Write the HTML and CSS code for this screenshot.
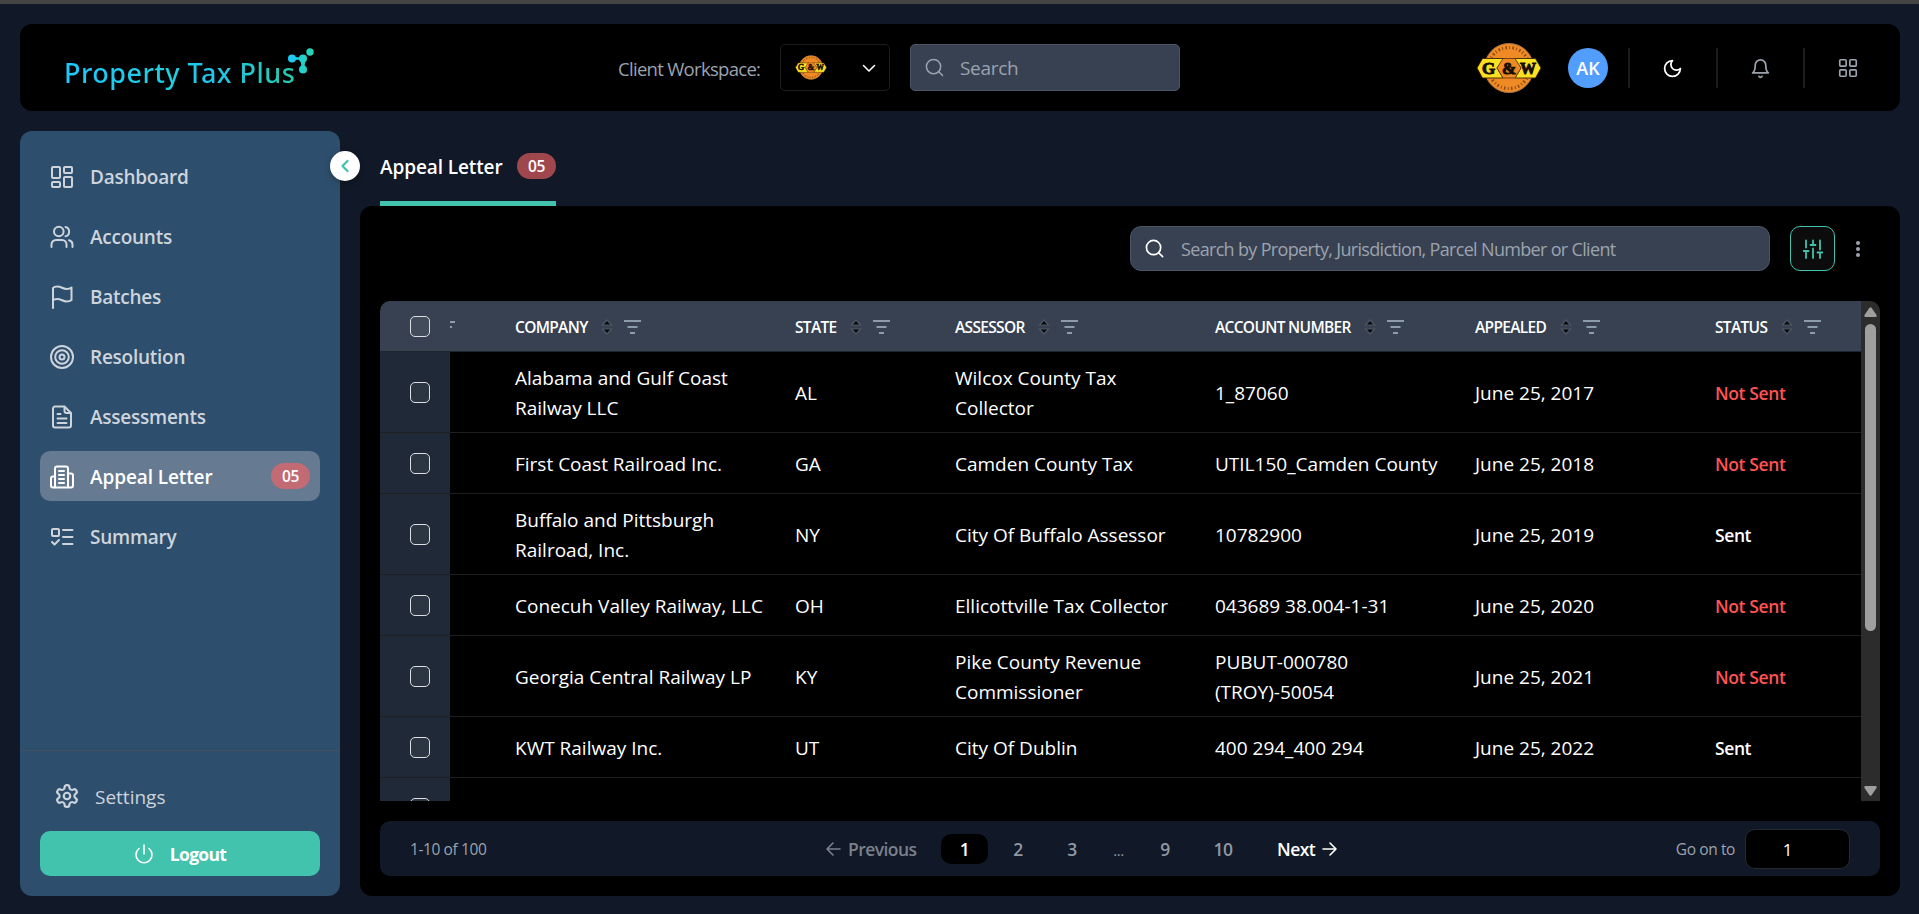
FILE: index.html
```html
<!DOCTYPE html>
<html lang="en">
<head>
<meta charset="utf-8">
<title>Property Tax Plus</title>
<link rel="stylesheet" href="styles.css">
</head>
<body>
<svg class="defs" width="0" height="0" aria-hidden="true">
  <defs>
    <symbol id="gw" viewBox="0 0 66 50">
      <circle cx="33" cy="25" r="24.5" fill="#f08a24" stroke="#a8764a" stroke-width="1"/>
      <circle cx="33" cy="25" r="20.5" fill="none" stroke="#8f4c18" stroke-width="3.2" stroke-dasharray="1.6 2.2 .9 2.4"/>
      <path d="M1 25 6.500 15.500H28L21 25l6 10H6.500z" fill="#fbe122" stroke="#3a2208" stroke-width=".9"/>
      <path d="M65 25 59.500 15.500H38L45 25l-6 10h20.500z" fill="#fbe122" stroke="#3a2208" stroke-width=".9"/>
      <path d="m21 25 6-9.500h12l6 9.500-6 10H27z" fill="#f08a24" stroke="#5a2d0c" stroke-width=".8"/>
      <text x="12.500" y="30.500" class="gw-letter">G</text>
      <text x="33" y="30.500" class="gw-letter">&amp;</text>
      <text x="52" y="30.500" class="gw-letter w">W</text>
    </symbol>
    <symbol id="sort" viewBox="0 0 12 16">
      <path d="M6 0 12 6.500H0zM6 16 0 9.500h12z" fill="#4d5663"/>
      <path d="M6 2 9.200 5.500H2.800zM6 14 2.800 10.500h6.400z" fill="#07090c"/>
    </symbol>
    <symbol id="filter" viewBox="0 0 18 14">
      <path d="M0 1h17M3.500 7h10M6 13h5" stroke="#8e9bab" stroke-width="2" fill="none"/>
    </symbol>
    <linearGradient id="brand" gradientUnits="userSpaceOnUse" x1="0" y1="0" x2="20" y2="0"><stop offset="0" stop-color="#1cc8ff"/><stop offset="1" stop-color="#27d3b8"/></linearGradient>
  </defs>
</svg>

<header class="topbar">
  <div class="brand">
    <span class="brand-name">Property Tax Plus</span>
    <svg class="brand-mark" width="26" height="32" viewBox="0 0 26 32" fill="url(#brand)">
      <circle cx="4" cy="10.500" r="4"/><circle cx="15" cy="10.500" r="4"/><circle cx="22" cy="4" r="3.700"/><circle cx="15" cy="21.500" r="4"/>
      <path d="M4 8q5.500 2.500 11 0v5q-5.500-2.500-11 0zM12 12q2.500 5 0 8h6q-2.500-3 0-8z"/>
    </svg>
  </div>
  <span class="workspace-label">Client Workspace:</span>
  <div class="workspace-select">
    <svg width="32" height="25"><use href="#gw"/></svg>
    <svg width="14" height="14" viewBox="0 0 14 14" class="stroke thin"><path d="m1.500 4.500 5.500 5.500 5.500-5.500"/></svg>
  </div>
  <div class="search">
    <svg width="19" height="19" viewBox="0 0 20 20" class="stroke thin"><circle cx="9" cy="9" r="7.500"/><path d="m14.500 14.500 4 4"/></svg>
    <span>Search</span>
  </div>
  <div class="tools">
    <svg class="client-logo" width="66" height="50"><use href="#gw"/></svg>
    <div class="avatar">AK</div>
    <div class="tool moon"><svg width="21" height="21" viewBox="0 0 24 24" class="stroke"><path d="M12 3a6 6 0 0 0 9 9 9 9 0 1 1-9-9Z"/></svg></div>
    <div class="tool"><svg width="21" height="21" viewBox="0 0 24 24" class="stroke"><path d="M6 8a6 6 0 0 1 12 0c0 7 3 9 3 9H3s3-2 3-9M10.300 21a1.940 1.940 0 0 0 3.400 0"/></svg></div>
    <div class="tool"><svg width="22" height="22" viewBox="0 0 24 24" class="stroke slim"><rect x="3" y="3" width="7" height="7" rx="1"/><rect x="14" y="3" width="7" height="7" rx="1"/><rect x="14" y="14" width="7" height="7" rx="1"/><rect x="3" y="14" width="7" height="7" rx="1"/></svg></div>
  </div>
</header>

<div class="body">
  <aside class="sidebar">
    <button class="collapse"><svg width="16" height="16" viewBox="0 0 16 16" class="stroke bold"><path d="M10.500 3 5.500 8l5 5"/></svg></button>
    <nav class="nav">
      <a class="nav-item"><svg viewBox="0 0 24 24" class="stroke"><rect x="2" y="2" width="8" height="11" rx="1"/><rect x="14" y="2" width="8" height="6" rx="1"/><rect x="14" y="12" width="8" height="10" rx="1"/><rect x="2" y="17" width="8" height="5" rx="1"/></svg><span>Dashboard</span></a>
      <a class="nav-item"><svg viewBox="0 0 24 24" class="stroke"><circle cx="8.800" cy="6.500" r="4.800"/><path d="M1.500 22v-2.500a4.500 4.500 0 0 1 4.500-4.500h6a4.500 4.500 0 0 1 4.500 4.500V22M15.500 2a4.800 4.800 0 0 1 0 9.300M22.500 22v-2.500a4.500 4.500 0 0 0-3.500-4.300"/></svg><span>Accounts</span></a>
      <a class="nav-item"><svg viewBox="0 0 24 24" class="stroke"><path d="M3 23V3s1-1.500 4.500-1.500S13 4 16.500 4 21.500 2.500 21.500 2.500V15s-1.500 1.500-5 1.500S11 14 7.500 14 3 15.500 3 15.500"/></svg><span>Batches</span></a>
      <a class="nav-item"><svg viewBox="0 0 24 24" class="stroke"><circle cx="12" cy="12" r="11"/><circle cx="12" cy="12" r="6.800"/><circle cx="12" cy="12" r="2.500"/></svg><span>Resolution</span></a>
      <a class="nav-item"><svg viewBox="0 0 24 24" class="stroke"><path d="M14.500 1.500H5A2 2 0 0 0 3 3.500v17a2 2 0 0 0 2 2h14a2 2 0 0 0 2-2V8zM14.500 1.500V6a2 2 0 0 0 2 2H21M7.500 9h3M7.500 13.500h9M7.500 18h9"/></svg><span>Assessments</span></a>
      <a class="nav-item active"><svg viewBox="0 0 24 24" class="stroke"><path d="M5 22.500V3.500a2 2 0 0 1 2-2h9a2 2 0 0 1 2 2v19zM5 11.500H3a2 2 0 0 0-2 2v7a2 2 0 0 0 2 2h2M18 8.500h3a2 2 0 0 1 2 2v10a2 2 0 0 1-2 2h-3M9 6h5M9 10h5M9 14h5M9 18h5"/></svg><span>Appeal Letter</span><b class="count">05</b></a>
      <a class="nav-item"><svg viewBox="0 0 24 24" class="stroke"><rect x="2" y="4" width="7" height="7" rx="1"/><path d="m2 17 2.500 2.500L9 15M13 5h9.500M13 12h9.500M13 19h9.500"/></svg><span>Summary</span></a>
    </nav>
    <div class="side-foot">
      <a class="settings"><svg width="26" height="26" viewBox="0 0 24 24" class="stroke"><path d="M12.220 2h-.44a2 2 0 0 0-2 2v.18a2 2 0 0 1-1 1.730l-.43.25a2 2 0 0 1-2 0l-.15-.08a2 2 0 0 0-2.730.73l-.22.38a2 2 0 0 0 .73 2.730l.15.1a2 2 0 0 1 1 1.720v.51a2 2 0 0 1-1 1.740l-.15.09a2 2 0 0 0-.73 2.730l.22.38a2 2 0 0 0 2.730.73l.15-.08a2 2 0 0 1 2 0l.43.25a2 2 0 0 1 1 1.730V20a2 2 0 0 0 2 2h.44a2 2 0 0 0 2-2v-.18a2 2 0 0 1 1-1.730l.43-.25a2 2 0 0 1 2 0l.15.08a2 2 0 0 0 2.730-.73l.22-.39a2 2 0 0 0-.73-2.730l-.15-.08a2 2 0 0 1-1-1.740v-.5a2 2 0 0 1 1-1.740l.15-.09a2 2 0 0 0 .73-2.730l-.22-.38a2 2 0 0 0-2.730-.73l-.15.08a2 2 0 0 1-2 0l-.43-.25a2 2 0 0 1-1-1.730V4a2 2 0 0 0-2-2z"/><circle cx="12" cy="12" r="3"/></svg><span>Settings</span></a>
      <button class="logout"><svg width="20" height="20" viewBox="0 0 20 20" class="stroke thin"><path d="M10 1v9M5 4.500a8 8 0 1 0 10 0"/></svg><span>Logout</span></button>
    </div>
  </aside>

  <main class="main">
    <div class="tabs"><div class="tab"><span>Appeal Letter</span><b class="count">05</b></div></div>
    <section class="panel">
      <div class="toolbar">
        <div class="search wide">
          <svg width="19" height="19" viewBox="0 0 20 20" class="stroke slim"><circle cx="9" cy="9" r="7.500"/><path d="m14.500 14.500 4 4"/></svg>
          <span>Search by Property, Jurisdiction, Parcel Number or Client</span>
        </div>
        <button class="filters"><svg width="20" height="20" viewBox="0 0 20 20" class="stroke slim"><path d="M3 1.500v7M3 12v7M.5 12h5M10 1.500v4M10 9.500V19M7.500 6h5M17 1.500v9M17 14v5M14.500 13.500h5"/></svg></button>
        <svg class="more" width="6" height="18" viewBox="0 0 6 18" fill="#9ca3af"><circle cx="3" cy="3" r="2"/><circle cx="3" cy="9" r="2"/><circle cx="3" cy="15" r="2"/></svg>
      </div>

      <div class="table">
        <div class="grid">
          <div class="row head">
            <div class="check"><i class="box"></i><i class="peek"></i></div>
            <div class="cell"><span>COMPANY</span><svg class="s"><use href="#sort"/></svg><svg class="f"><use href="#filter"/></svg></div>
            <div class="cell"><span>STATE</span><svg class="s"><use href="#sort"/></svg><svg class="f"><use href="#filter"/></svg></div>
            <div class="cell"><span>ASSESSOR</span><svg class="s"><use href="#sort"/></svg><svg class="f"><use href="#filter"/></svg></div>
            <div class="cell"><span>ACCOUNT NUMBER</span><svg class="s"><use href="#sort"/></svg><svg class="f"><use href="#filter"/></svg></div>
            <div class="cell"><span>APPEALED</span><svg class="s"><use href="#sort"/></svg><svg class="f"><use href="#filter"/></svg></div>
            <div class="cell"><span>STATUS</span><svg class="s"><use href="#sort"/></svg><svg class="f"><use href="#filter"/></svg></div>
          </div>
          <div class="row tall"><div class="check"><i class="box"></i></div><div>Alabama and Gulf Coast<br>Railway LLC</div><div>AL</div><div>Wilcox County Tax<br>Collector</div><div>1_87060</div><div>June 25, 2017</div><div class="status unsent">Not Sent</div></div>
          <div class="row"><div class="check"><i class="box"></i></div><div>First Coast Railroad Inc.</div><div>GA</div><div>Camden County Tax</div><div>UTIL150_Camden County</div><div>June 25, 2018</div><div class="status unsent">Not Sent</div></div>
          <div class="row tall"><div class="check"><i class="box"></i></div><div>Buffalo and Pittsburgh<br>Railroad, Inc.</div><div>NY</div><div>City Of Buffalo Assessor</div><div>10782900</div><div>June 25, 2019</div><div class="status">Sent</div></div>
          <div class="row"><div class="check"><i class="box"></i></div><div>Conecuh Valley Railway, LLC</div><div>OH</div><div>Ellicottville Tax Collector</div><div>043689 38.004-1-31</div><div>June 25, 2020</div><div class="status unsent">Not Sent</div></div>
          <div class="row tall"><div class="check"><i class="box"></i></div><div>Georgia Central Railway LP</div><div>KY</div><div>Pike County Revenue<br>Commissioner</div><div>PUBUT-000780<br>(TROY)-50054</div><div>June 25, 2021</div><div class="status unsent">Not Sent</div></div>
          <div class="row"><div class="check"><i class="box"></i></div><div>KWT Railway Inc.</div><div>UT</div><div>City Of Dublin</div><div>400 294_400 294</div><div>June 25, 2022</div><div class="status">Sent</div></div>
          <div class="row"><div class="check"><i class="box"></i></div></div>
        </div>
        <div class="scrollbar">
          <svg width="13" height="10" viewBox="0 0 13 10" fill="#9f9f9f"><path d="M5.500.8q1-1.200 2 0L12.500 8q.6 2-1 2h-10q-1.600 0-1-2z"/></svg>
          <div class="thumb"></div>
          <svg class="down" width="13" height="10" viewBox="0 0 13 10" fill="#9f9f9f"><path d="M5.500 9.200q1 1.200 2 0L12.500 2q.6-2-1-2h-10Q-.1 0 .5 2z"/></svg>
        </div>
      </div>

      <footer class="pager">
        <span class="range">1-10 of 100</span>
        <div class="pages">
          <span class="prev"><svg width="16" height="16" viewBox="0 0 16 16" class="stroke thin"><path d="M15 8H2M8 2 2 8l6 6"/></svg><span>Previous</span></span>
          <b class="page current">1</b><b class="page">2</b><b class="page">3</b><b class="page dots">...</b><b class="page">9</b><b class="page ten">10</b>
          <span class="next"><span>Next</span><svg width="16" height="16" viewBox="0 0 16 16" class="stroke thin"><path d="M1 8h13M8 2l6 6-6 6"/></svg></span>
        </div>
        <div class="goto"><span>Go on to</span><div class="goto-input">1</div></div>
      </footer>
    </section>
  </main>
</div>
</body>
</html>
```
FILE: styles.css
```css
* { box-sizing: border-box; }
body {
  margin: 0;
  height: 914px;
  overflow: hidden;
  display: flex;
  flex-direction: column;
  gap: 20px;
  padding: 20px 19px 18px 20px;
  border-top: 4px solid #444;
  background: #111827;
  color: #fff;
  font-family: "Open Sans", "Noto Sans", sans-serif;
  font-size: 19px;
}
button { font: inherit; border: 0; padding: 0; }
svg { display: block; flex: none; }
.defs { position: absolute; }
.stroke { fill: none; stroke: currentColor; stroke-width: 2; stroke-linecap: round; stroke-linejoin: round; }
.stroke.slim { stroke-width: 1.8; }
.stroke.thin { stroke-width: 1.6; }
.stroke.bold { stroke-width: 2.3; }
.gw-letter { font: 900 17px "Liberation Serif", serif; text-anchor: middle; fill: #141006; stroke: #141006; stroke-width: 1px; }
.gw-letter.w { font-size: 16px; }

.topbar {
  height: 87px;
  flex: none;
  display: flex;
  align-items: center;
  background: #000;
  border-radius: 12px;
  padding: 0 9.5px 0 44px;
}
.brand { width: 554px; display: flex; align-items: flex-start; }
.brand-name {
  width: 232px;
  margin: 10px -8px 0 0;
  font-family: "Noto Sans", "Open Sans", sans-serif;
  font-size: 27px;
  font-weight: 500;
  line-height: 40px;
  letter-spacing: .48px;
  white-space: nowrap;
  background: linear-gradient(90deg, #1cc8ff, #20cfe0 45%, #1cc8f0 62%, #27c9a8);
  -webkit-background-clip: text;
  background-clip: text;
  color: transparent;
}
.brand-mark { margin-top: 5px; }
.workspace-label { width: 162px; padding-top: 1px; color: #9ca3af; font-weight: 500; font-size: 18.5px; letter-spacing: -.7px; white-space: nowrap; }
.workspace-select {
  width: 110px; height: 47px;
  border: 1px solid #1d1d1f; border-radius: 5px;
  display: flex; align-items: center; justify-content: space-between;
  padding: 0 13px 0 14px;
}
.search {
  width: 270px; height: 47px;
  margin-left: 20px;
  display: flex; align-items: center; gap: 16px;
  padding-left: 14px;
  background: #374151;
  border: 1px solid #4b5563;
  border-radius: 5px;
  color: #9ca3af;
}
.search span { padding-top: 1px; letter-spacing: -.3px; }
.tools { margin-left: auto; display: flex; align-items: center; }
.avatar {
  width: 40px; height: 40px; margin: 1px 20px 0 26px;
  border-radius: 50%;
  background: #529eff;
  display: grid; place-items: center;
  font-size: 18px; font-weight: 600;
}
.tool {
  width: 87.5px; height: 40px;
  margin-top: 1px;
  border-left: 2px solid #1c1c1d;
  display: grid; place-items: center;
  color: #9ca3af;
}
.tool.moon { color: #fff; }

.body { flex: 1; display: flex; gap: 20px; min-height: 0; }
.sidebar {
  position: relative;
  width: 320px; height: 765px;
  display: flex; flex-direction: column; justify-content: space-between;
  background: #2d4e6c;
  border-radius: 12px;
  color: #cdd4db;
}
.collapse {
  position: absolute; left: 310px; top: 20px;
  width: 30px; height: 30px;
  border-radius: 50%;
  background: #fff; color: #41c3ad;
  display: grid; place-items: center;
  box-shadow: 0 2px 6px rgba(0, 0, 0, .25);
}
.nav { display: flex; flex-direction: column; gap: 10px; padding: 20px 20px 0; }
.nav-item {
  height: 50px; border-radius: 10px;
  display: flex; align-items: center; gap: 16px;
  padding: 0 10px;
  font-weight: 600;
  letter-spacing: -.25px;
}
.nav-item span { padding-top: 2px; }
.nav-item svg { width: 24px; height: 24px; margin-top: 1px; }
.nav-item.active { background: #667b91; color: #fff; letter-spacing: -.1px; }
.count {
  width: 39px; height: 26px;
  border-radius: 13px;
  display: grid; place-items: center;
  font-size: 15.5px; font-weight: 600;
  letter-spacing: -.3px;
  color: #fff;
}
.nav-item .count { margin-left: auto; background: #c36b75; }
.side-foot { border-top: 1px solid #42505f; padding: 22px 20px 20px; height: 146px; display: flex; flex-direction: column; justify-content: space-between; }
.settings { display: flex; align-items: center; gap: 14px; height: 45px; padding-left: 14px; font-weight: 500; }
.settings span { padding: 2px 0 0 1px; }
.logout {
  height: 45px; border-radius: 10px;
  background: #41c3ad; color: #fff;
  display: flex; align-items: center; justify-content: center; gap: 16px;
  font-size: 17.5px; font-weight: 700; letter-spacing: -.7px;
}
.logout span { padding-top: 1px; }

.main { flex: 1; display: flex; flex-direction: column; }
.tabs { height: 75px; padding: 0 20px; display: flex; }
.tab {
  height: 75px; width: 176px;
  display: flex; align-items: center; justify-content: space-between;
  border-bottom: 5px solid #41c3ad;
  font-weight: 600;
  letter-spacing: -.1px;
  white-space: nowrap;
}
.tab > span { padding-top: 2px; }
.tab .count { background: #a0474e; }
.panel { height: 690px; background: #000; border-radius: 12px; padding: 20px; display: flex; flex-direction: column; }
.toolbar { height: 45px; display: flex; align-items: center; justify-content: flex-end; }
.search.wide { width: 640px; height: 45px; border-radius: 11px; gap: 17px; }
.search.wide svg { color: #fff; }
.search.wide span { font-size: 18px; letter-spacing: -.67px; }
.filters {
  width: 45px; height: 45px; margin-left: 20px;
  border: 1px solid #41c3ad; border-radius: 10px;
  background: #0c0c0d; color: #41c3ad;
  display: grid; place-items: center;
}
.more { margin: 0 19px 0 20px; }

.table { height: 500px; margin-top: 30px; display: flex; overflow: hidden; border-radius: 10px 10px 0 0; }
.grid { flex: 1; height: 500px; overflow: hidden; }
.row {
  display: grid;
  grid-template-columns: 135px 280px 160px 260px 260px 240px 1fr;
  align-items: center;
  height: 61px;
  border-bottom: 1px solid #1e1f20;
  line-height: 30px;
  white-space: nowrap;
}
.row > div:not(.check):not(.cell) { padding-top: 2px; }
.row.tall { height: 81px; }
.check { width: 70px; height: 100%; background: #1f2937; display: flex; align-items: center; padding-left: 30px; }
.box { width: 20px; height: 21px; border: 1.500px solid #dcdfe2; border-radius: 5px; background: rgba(255, 255, 255, .06); }
.row.head { height: 51px; background: #374151; border-bottom-color: #1c2430; font-size: 15.5px; font-weight: 600; letter-spacing: -.68px; }
.head .check { background: none; width: 80px; }
.peek { width: 5px; height: 7px; margin: -4px 0 0 20px; border-top: 2px solid #8e9bab; background: linear-gradient(#8e9bab, #8e9bab) 0 100% / 2px 2px no-repeat; }
.cell { display: flex; align-items: center; padding-top: 2px; }
.s { width: 12px; height: 16px; margin: 0 11px 0 13.5px; }
.f { width: 18px; height: 14px; }
.status { font-size: 17.5px; font-weight: 600; letter-spacing: -.4px; }
.unsent { color: #ff5353; }
.scrollbar { width: 19px; background: #2c2c2c; display: flex; flex-direction: column; align-items: center; padding: 6px 0 5px; }
.thumb { width: 11px; height: 307px; margin-top: 7px; border-radius: 6px; background: #9f9f9f; }
.down { margin-top: auto; }

.pager {
  height: 55px; margin-top: 20px; padding: 0 30px;
  border-radius: 10px; background: #111827;
  display: flex; align-items: center;
  color: #9ca3af; font-size: 15.5px;
  letter-spacing: -.4px;
}
.range { width: 415px; padding-top: 1px; }
.pages { display: flex; align-items: center; font-size: 17.5px; }
.prev, .next { display: flex; align-items: center; gap: 7px; font-weight: 600; letter-spacing: -.55px; }
.prev > span, .next > span { padding-top: 1px; }
.prev { width: 116px; color: #7b808b; }
.next { margin-left: 27px; color: #fff; }
.page { width: 54px; padding-top: 1px; text-align: center; font-weight: 600; color: #8f97a4; }
.page.ten { margin-left: 4px; }
.page.current { width: 47px; height: 30px; border-radius: 10px; background: #000; color: #fff; line-height: 29px; margin-right: 3px; }
.page.dots { width: 39px; font-size: 15px; font-weight: 400; padding-top: 3px; }
.goto { margin-left: auto; display: flex; align-items: center; gap: 10px; }
.goto > span { padding-top: 1px; letter-spacing: -.4px; }
.goto-input { width: 105px; height: 40px; border: 1px solid #26292e; border-radius: 10px; background: #000; color: #fff; font-size: 17px; display: grid; place-items: center; padding: 1px 20px 0 0; }
```
